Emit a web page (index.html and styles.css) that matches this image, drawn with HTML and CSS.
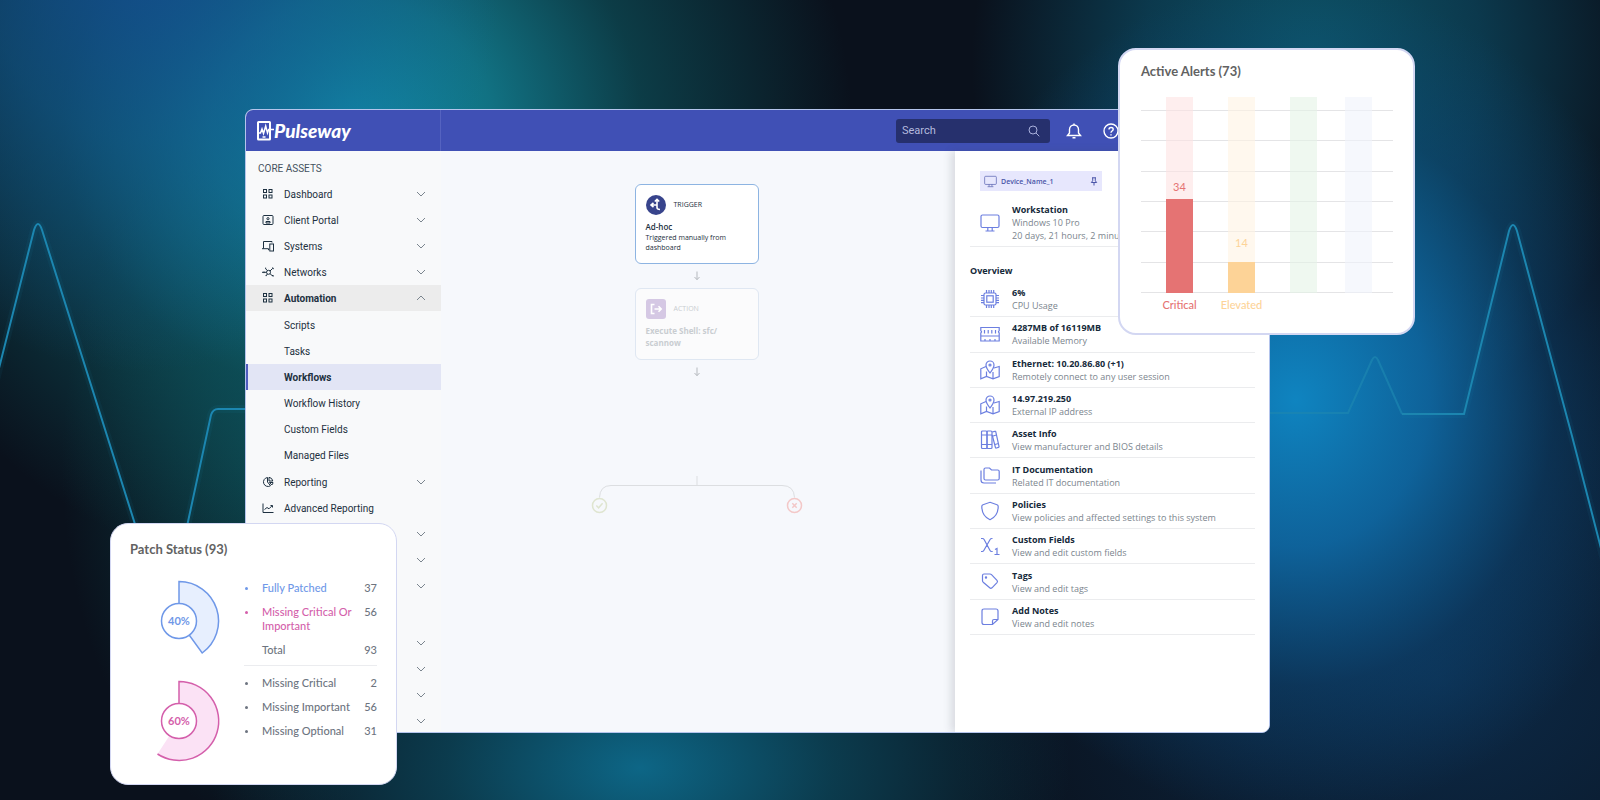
FILE: index.html
```html
<!DOCTYPE html>
<html lang="en">
<head>
    <meta charset="UTF-8">
    <meta name="viewport" content="width=device-width, initial-scale=1.0">
    <title>Pulseway</title>
    <link rel="stylesheet" href="styles.css">
</head>
<body>
    <!-- Shared icons -->
    <svg class="sprite" aria-hidden="true">
        <symbol id="chevron" viewBox="0 0 10 10"><path d="M1 3l4 4 4-4"/></symbol>
        <symbol id="grid" viewBox="0 0 12 12"><rect x="1.5" y="1.5" width="3" height="3"/><rect x="7" y="1.5" width="3" height="3"/><rect x="1.5" y="7" width="3" height="3"/><rect x="7" y="7" width="3" height="3"/></symbol>
        <symbol id="monitor" viewBox="0 0 20 20"><rect x="1" y="2" width="18" height="12.5" rx="1.5"/><path d="M7.8 14.5v3M12.2 14.5v3M5.5 18h9"/></symbol>
        <symbol id="map" viewBox="0 0 20 20"><path d="M6 6.500L.8 8.800v10l5.700-2.300 6.500 2.300 6.200-2.300v-10L14 8M6.500 11.500v5M13 12v6.800"/><path d="M10 13C7.800 10.200 6 7.800 6 5a4 4 0 0 1 8 0c0 2.800-1.800 5.200-4 8z"/><circle cx="10" cy="5" r="1"/></symbol>
        <symbol id="arrow" viewBox="0 0 8 10"><path d="M4 0.500v8M1.500 6L4 8.700 6.500 6"/></symbol>
    </svg>

    <div class="hero">
        <svg class="pulse" viewBox="0 0 1600 800" preserveAspectRatio="xMidYMid slice" aria-hidden="true">
            <path class="pulse-glow" d="M-4 380L34 230Q38 218 42 230L140 540L164 640L186 531L211 415Q213 409 218 409H260"/>
            <path d="M-4 380L34 230Q38 218 42 230L140 540L164 640L186 531L211 415Q213 409 218 409H260"/>
            <path class="pulse-glow" d="M1402 414H1464L1509 231Q1513 219 1517 231L1572 436L1604 560"/>
            <path class="pulse-dim" d="M1260 413H1348L1372 360Q1375 354 1378 360L1402 414"/>
            <path d="M1402 414H1464L1509 231Q1513 219 1517 231L1572 436L1604 560"/>
        </svg>

        <div class="stage">
            <div class="window">
                <header class="topbar">
                    <a class="logo" href="#">
                        <svg viewBox="0 0 17 20" aria-hidden="true"><rect x="1" y="1" width="12" height="17.500" rx="0.500"/><path class="logo-line" d="M2 12h1.500L5 8l1.500 4.500L8.700 5l1.800 7 1.200-3.500H17M5.500 16h3"/></svg>
                        <span>Pulseway</span>
                    </a>
                    <div class="topbar-tools">
                        <label class="search">
                            <input type="search" placeholder="Search" aria-label="Search">
                            <svg viewBox="0 0 12 12" aria-hidden="true"><circle cx="5" cy="5" r="4"/><path d="M8 8l3.300 3.300"/></svg>
                        </label>
                        <button class="tool" type="button" aria-label="Notifications">
                            <svg viewBox="0 0 16 16"><path d="M1.500 12.500h13L12.500 10V6.500C12.500 4 10.500 2 8 2S3.500 4 3.500 6.500V10z"/><path d="M8 .5V2M6.500 14.800h3"/></svg>
                        </button>
                        <button class="tool" type="button" aria-label="Help">
                            <svg viewBox="0 0 16 16"><circle cx="8" cy="8" r="7"/><path d="M6 6.500c0-2.700 4.200-2.700 4.200-.2C10.200 8 8 8 8 9.700M8 11.200v1.200"/></svg>
                        </button>
                    </div>
                </header>

                <div class="workspace">
                    <nav class="sidebar">
                        <h2>CORE ASSETS</h2>
                        <a class="nav-item" href="#"><svg class="nav-icon"><use href="#grid"/></svg>Dashboard<svg class="chevron"><use href="#chevron"/></svg></a>
                        <a class="nav-item" href="#"><svg class="nav-icon" viewBox="0 0 12 12"><rect x="1" y="1.500" width="10" height="9" rx="1"/><circle cx="6" cy="4.700" r="1.100"/><path d="M4 9V7.500h4V9z"/></svg>Client Portal<svg class="chevron"><use href="#chevron"/></svg></a>
                        <a class="nav-item" href="#"><svg class="nav-icon" viewBox="0 0 12 12"><path d="M10 2.500V1.500H1.500v7M0 8.700h6.500v1.500"/><rect x="7.800" y="4" width="3.700" height="7"/></svg>Systems<svg class="chevron"><use href="#chevron"/></svg></a>
                        <a class="nav-item" href="#"><svg class="nav-icon" viewBox="0 0 12 12"><circle cx="6.500" cy="6.300" r="2"/><path d="M0 6.300h4.500M5.300 4.600L3.500 2.500M8 5l2.500-2.500M8 7.700l2.500 2.200M5.300 8l-1 1.500"/><path d="M2 5.500v1.600M3 2.200h1.200M10 2h1.200v1.200M10 9.500h1.300v1M3.600 9.600h1.200"/></svg>Networks<svg class="chevron"><use href="#chevron"/></svg></a>
                        <a class="nav-item open" href="#"><svg class="nav-icon"><use href="#grid"/></svg>Automation<svg class="chevron"><use href="#chevron"/></svg></a>
                        <div class="submenu">
                            <a class="nav-item" href="#">Scripts</a>
                            <a class="nav-item" href="#">Tasks</a>
                            <a class="nav-item active" href="#">Workflows</a>
                            <a class="nav-item" href="#">Workflow History</a>
                            <a class="nav-item" href="#">Custom Fields</a>
                            <a class="nav-item" href="#">Managed Files</a>
                        </div>
                        <a class="nav-item" href="#"><svg class="nav-icon" viewBox="0 0 12 12"><path d="M5.500 1.500a4.500 4.500 0 1 0 3 8.200L5.500 6z"/><path d="M7 1.300A4.500 4.500 0 0 1 10.800 5H7zM7.500 6.500H11A4 4 0 0 1 9.800 9z"/></svg>Reporting<svg class="chevron"><use href="#chevron"/></svg></a>
                        <a class="nav-item" href="#"><svg class="nav-icon" viewBox="0 0 12 12"><path d="M1 1.500v9h10.500M2.500 7.500l2.500-2 2 1.300 3-3M8.500 3.500h2V5.500"/></svg>Advanced Reporting</a>
                        <button class="nav-item" type="button" aria-label="Expand"><svg class="chevron"><use href="#chevron"/></svg></button>
                        <button class="nav-item" type="button" aria-label="Expand"><svg class="chevron"><use href="#chevron"/></svg></button>
                        <button class="nav-item" type="button" aria-label="Expand"><svg class="chevron"><use href="#chevron"/></svg></button>
                        <div class="nav-group">
                            <button class="nav-item" type="button" aria-label="Expand"><svg class="chevron"><use href="#chevron"/></svg></button>
                            <button class="nav-item" type="button" aria-label="Expand"><svg class="chevron"><use href="#chevron"/></svg></button>
                            <button class="nav-item" type="button" aria-label="Expand"><svg class="chevron"><use href="#chevron"/></svg></button>
                            <button class="nav-item" type="button" aria-label="Expand"><svg class="chevron"><use href="#chevron"/></svg></button>
                        </div>
                    </nav>

                    <main class="canvas">
                        <section class="step">
                            <div class="step-head">
                                <span class="step-icon trigger"><svg viewBox="0 0 20 20"><path d="M5.500 10h5.500M7.500 7.800L5 10l2.500 2.200M11 4.500v8q0 2 3 2M8.800 6.500L11 4.300l2.200 2.200"/></svg></span>
                                <span>TRIGGER</span>
                            </div>
                            <h3>Ad-hoc</h3>
                            <p>Triggered manually from dashboard</p>
                        </section>
                        <svg class="flow-arrow"><use href="#arrow"/></svg>
                        <section class="step faded">
                            <div class="step-head">
                                <span class="step-icon action"><svg viewBox="0 0 20 20"><path d="M8.500 5.500H5.500v9h3M8.500 10h6.500M12.500 7.300L15.200 10l-2.700 2.700"/></svg></span>
                                <span>ACTION</span>
                            </div>
                            <h3>Execute Shell: sfc/ scannow</h3>
                        </section>
                        <svg class="flow-arrow"><use href="#arrow"/></svg>
                        <svg class="branch" viewBox="0 0 212 40" aria-hidden="true">
                            <path class="branch-line" d="M106 1v9.500M8.500 22.500Q9 10.500 20 10.500H191Q203 10.500 203.500 22.500"/>
                            <circle class="yes" cx="8.500" cy="30.500" r="7"/>
                            <path class="yes" d="M5.300 30.500l2.300 2.300 4-4.500"/>
                            <circle class="no" cx="203.500" cy="30.500" r="7"/>
                            <path class="no" d="M201.300 28.300l4.400 4.400M205.700 28.300l-4.400 4.400"/>
                        </svg>
                    </main>

                    <aside class="details">
                        <div class="device-chip">
                            <svg class="chip-monitor"><use href="#monitor"/></svg>
                            <span>Device_Name_1</span>
                            <svg class="chip-pin" viewBox="0 0 8 9"><path d="M2 .8h4M2.700.8v3L1.300 5.500h5.400L5.300 3.800v-3M4 5.500v3"/></svg>
                        </div>
                        <div class="info-row machine">
                            <svg class="info-icon"><use href="#monitor"/></svg>
                            <div>
                                <h3>Workstation</h3>
                                <p>Windows 10 Pro</p>
                                <p>20 days, 21 hours, 2 minu</p>
                            </div>
                        </div>
                        <h2>Overview</h2>
                        <div class="info-list">
                            <div class="info-row">
                                <svg class="info-icon" viewBox="0 0 20 20"><rect x="4" y="4" width="12" height="12" rx="1.500"/><rect x="6.800" y="6.800" width="6.400" height="6.400"/><path d="M6.500 1v3M9 1v3M11.300 1v3M13.700 1v3M6.500 16v3M9 16v3M11.300 16v3M13.700 16v3M1 6.500h3M1 9h3M1 11.300h3M1 13.700h3M16 6.500h3M16 9h3M16 11.300h3M16 13.700h3"/></svg>
                                <div><h3>6%</h3><p>CPU Usage</p></div>
                            </div>
                            <div class="info-row">
                                <svg class="info-icon" viewBox="0 0 20 20"><path d="M.8 3.500h18.400v3.200q-1.500 1 0 2.300v3H.8v-3q1.500-1.300 0-2.300zM.8 12v5h18.400v-5M4.500 6v3.500M8.200 6v3.500M11.800 6v3.500M15.500 6v3.500M5 17v-2M10 17v-2M15 17v-2"/></svg>
                                <div><h3>4287MB of 16119MB</h3><p>Available Memory</p></div>
                            </div>
                            <div class="info-row">
                                <svg class="info-icon"><use href="#map"/></svg>
                                <div><h3>Ethernet: 10.20.86.80 (+1)</h3><p>Remotely connect to any user session</p></div>
                            </div>
                            <div class="info-row">
                                <svg class="info-icon"><use href="#map"/></svg>
                                <div><h3>14.97.219.250</h3><p>External IP address</p></div>
                            </div>
                            <div class="info-row">
                                <svg class="info-icon" viewBox="0 0 20 20"><rect x="1.500" y="1" width="5.500" height="17.500" rx="1"/><rect x="7" y="1" width="5" height="17.500" rx="1"/><path d="M1.500 5H12M1.500 14.500H12M12.200 2l2.600-.7q.8-.2 1 .6l3.200 14.500q.2.800-.6 1l-2 .6q-.8.200-1-.6L12.200 5M13 6l3.500-1M15 14.500l3.500-1"/></svg>
                                <div><h3>Asset Info</h3><p>View manufacturer and BIOS details</p></div>
                            </div>
                            <div class="info-row">
                                <svg class="info-icon" viewBox="0 0 20 20"><path d="M5.500 2h4l2 2h6.200q1.500 0 1.500 1.500v7q0 1.500-1.500 1.500H5.500Q4 14 4 12.500v-9Q4 2 5.500 2zM1 4.500v9.500q0 3 3 3h12"/></svg>
                                <div><h3>IT Documentation</h3><p>Related IT documentation</p></div>
                            </div>
                            <div class="info-row">
                                <svg class="info-icon" viewBox="0 0 20 20"><path d="M10 1.300l7 2.400q1.200.4 1.200 1.700C18.200 11.500 15 16.500 10 18.700 5 16.500 1.800 11.500 1.800 5.400q0-1.300 1.200-1.700z"/></svg>
                                <div><h3>Policies</h3><p>View policies and affected settings to this system</p></div>
                            </div>
                            <div class="info-row">
                                <svg class="info-icon" viewBox="0 0 20 20"><path d="M1 2.500h1.500q1 0 1.600 1l5.800 10.800q.6 1.200 1.800 1.200h1M12.500 2.500h-.8q-1 0-1.600 1L3.800 14.500q-.6 1-1.600 1H1M15 13.500l2-1v6M14.500 18.500h5"/></svg>
                                <div><h3>Custom Fields</h3><p>View and edit custom fields</p></div>
                            </div>
                            <div class="info-row">
                                <svg class="info-icon" viewBox="0 0 20 20"><path d="M2.500 3.500q0-1.500 1.500-1.500h6q.8 0 1.500.7l5.500 5.600q1 1.200 0 2.300l-5 5.200q-1.200 1-2.300 0L3.200 10.200q-.7-.7-.7-1.500z"/><circle cx="6" cy="5.500" r=".6"/></svg>
                                <div><h3>Tags</h3><p>View and edit tags</p></div>
                            </div>
                            <div class="info-row">
                                <svg class="info-icon" viewBox="0 0 20 20"><path d="M4 2h12q2 0 2 2v8.500L12.500 17.500H4q-2 0-2-2V4q0-2 2-2zM18 12.500h-4q-1.500 0-1.500 1.500v3.500"/></svg>
                                <div><h3>Add Notes</h3><p>View and edit notes</p></div>
                            </div>
                        </div>
                    </aside>
                </div>
            </div>

            <section class="card alerts">
                <h2>Active Alerts (73)</h2>
                <div class="chart">
                    <div class="gridlines"><i></i><i></i><i></i><i></i><i></i><i></i><i></i></div>
                    <div class="bar critical"><span>34</span><div class="fill" style="height: 48%"></div><b>Critical</b></div>
                    <div class="bar elevated"><span>14</span><div class="fill" style="height: 16%"></div><b>Elevated</b></div>
                    <div class="bar normal"></div>
                    <div class="bar low"></div>
                </div>
            </section>

            <section class="card patches">
                <h2>Patch Status (93)</h2>
                <div class="patch-body">
                    <div class="donuts">
                        <svg class="donut patched" viewBox="0 0 84 84" role="img">
                            <path class="wedge edge" d="M42 42V2.500A39.500 39.500 0 0 1 65.200 74z"/>
                            <circle cx="42" cy="42" r="17.500"/>
                            <text x="42" y="46">40%</text>
                        </svg>
                        <svg class="donut missing" viewBox="0 0 84 84" role="img">
                            <path class="wedge" d="M42 42V2.500A39.500 39.500 0 1 1 20.500 75z"/>
                            <path class="edge" d="M42 42V2.500A39.500 39.500 0 1 1 20.500 75"/>
                            <circle cx="42" cy="42" r="17.500"/>
                            <text x="42" y="46">60%</text>
                        </svg>
                    </div>
                    <div class="patch-lists">
                        <ul>
                            <li class="patched"><span>Fully Patched</span><b>37</b></li>
                            <li class="missing"><span>Missing Critical Or Important</span><b>56</b></li>
                            <li class="total"><span>Total</span><b>93</b></li>
                        </ul>
                        <ul>
                            <li><span>Missing Critical</span><b>2</b></li>
                            <li><span>Missing Important</span><b>56</b></li>
                            <li><span>Missing Optional</span><b>31</b></li>
                        </ul>
                    </div>
                </div>
            </section>
        </div>
    </div>
</body>
</html>
```

FILE: styles.css
```css
* {
    box-sizing: border-box;
}

body {
    margin: 0;
    font-family: "Open Sans", "Noto Sans", sans-serif;
    color: #1d3040;
    background-color: #0a111c;
}

h2, h3, p, ul {
    margin: 0;
    padding: 0;
}

svg {
    fill: none;
    stroke: currentColor;
    flex-shrink: 0;
}

a {
    color: inherit;
    text-decoration: none;
}

button {
    padding: 0;
    border: none;
    background: none;
    color: inherit;
    cursor: pointer;
}

.sprite {
    position: absolute;
    width: 0;
    height: 0;
}

.hero {
    position: relative;
    display: flex;
    min-height: 100vh;
    padding: 109px 330px 67px 245px;
    overflow: hidden;
    background:
        radial-gradient(ellipse 380px 420px at 81% 50%, #0f84c0 0%, rgba(15, 110, 172, 0.85) 35%, rgba(13, 76, 126, 0.45) 68%, rgba(13, 60, 100, 0) 100%),
        radial-gradient(ellipse 340px 380px at 82% 8%, #0d5568 0%, rgba(12, 74, 98, 0.7) 50%, rgba(12, 60, 80, 0) 100%),
        radial-gradient(ellipse 360px 420px at 9% -6%, rgba(20, 78, 148, 0.85) 0%, rgba(18, 88, 150, 0.55) 45%, rgba(18, 90, 145, 0) 100%),
        radial-gradient(ellipse 500px 460px at 22% 16%, #1290a8 0%, rgba(18, 124, 142, 0.9) 28%, rgba(14, 96, 106, 0.55) 58%, rgba(12, 70, 76, 0) 100%),
        radial-gradient(ellipse 430px 260px at 40% 96%, #0d6686 0%, rgba(12, 82, 104, 0.65) 45%, rgba(12, 70, 90, 0) 100%),
        radial-gradient(ellipse 210px 360px at 17% 58%, rgba(13, 82, 88, 0.7) 0%, rgba(13, 70, 80, 0) 100%),
        radial-gradient(ellipse 500px 400px at 90% 85%, #0c2a48 0%, rgba(12, 36, 62, 0) 100%),
        #0a111c;
}

.pulse {
    position: absolute;
    inset: 0;
    width: 100%;
    height: 100%;
    color: #1c86b0;
    stroke-width: 2;
}

.pulse-glow {
    stroke-width: 8;
    opacity: 0.08;
}

.pulse-dim {
    opacity: 0.7;
}

.stage {
    position: relative;
    display: flex;
    flex: 1;
}

.window {
    display: flex;
    flex: 1;
    flex-direction: column;
    overflow: hidden;
    border: 1px solid #b4c4ec;
    border-radius: 8px;
    background-color: #f6f8fc;
}

/* Top bar */
.topbar {
    display: flex;
    height: 41px;
    color: #fff;
    background-color: #4050b5;
}

.logo {
    display: flex;
    align-items: center;
    width: 195px;
    padding-left: 11px;
    border-right: 1px solid #5563c0;
    font-family: Lato, sans-serif;
    font-size: 19px;
    font-weight: 900;
    font-style: italic;
}

.logo svg {
    width: 17px;
    height: 20px;
    stroke-width: 2;
}

.logo-line {
    stroke-width: 1.5;
}

.topbar-tools {
    display: flex;
    flex: 1;
    align-items: center;
    justify-content: flex-end;
    gap: 16px;
    padding-right: 145px;
}

.search {
    display: flex;
    align-items: center;
    width: 154px;
    height: 24px;
    padding: 0 10px 0 6px;
    border-radius: 3px;
    color: #a9b0dc;
    background-color: #26306d;
}

.search input {
    flex: 1;
    min-width: 0;
    padding: 0;
    border: none;
    outline: none;
    font-family: Roboto, sans-serif;
    font-size: 11px;
    color: #fff;
    background: none;
}

.search input::placeholder {
    color: #b4badd;
}

.search svg {
    width: 12px;
    height: 12px;
}

.tool {
    display: flex;
    width: 16px;
    height: 16px;
    margin-right: 5px;
}

.tool svg {
    width: 16px;
    height: 16px;
    stroke-width: 1.4;
}

.workspace {
    display: flex;
    flex: 1;
}

/* Sidebar */
.sidebar {
    width: 195px;
    padding-top: 6px;
    font-family: Roboto, sans-serif;
    background-color: #f8f9fa;
}

.sidebar h2 {
    padding-left: 12px;
    font-size: 10px;
    font-weight: 400;
    line-height: 24px;
    color: #44525e;
}

.nav-item {
    display: flex;
    align-items: center;
    width: 100%;
    height: 26px;
    padding: 0 15px 0 16px;
    font-size: 10px;
}

.nav-icon {
    width: 12px;
    height: 12px;
    margin-right: 10px;
}

.chevron {
    width: 10px;
    height: 10px;
    margin-left: auto;
    color: #7b858e;
}

.nav-item.open {
    font-weight: 700;
    background-color: #ececec;
}

.nav-item.open .chevron {
    transform: rotate(180deg);
}

.submenu {
    padding: 1px 0;
}

.submenu .nav-item {
    padding-left: 38px;
}

.submenu .active {
    padding-left: 36px;
    border-left: 2px solid #4f5bbd;
    font-weight: 700;
    background-color: #e2e5f5;
}

/* The last row is cut by the window edge */
.nav-group {
    margin-bottom: -4px;
    padding-top: 31px;
}

/* Workflow canvas */
.canvas {
    display: flex;
    flex: 1;
    flex-direction: column;
    align-items: center;
    padding: 33px 3px 0 0;
}

.step {
    width: 124px;
    padding: 10px;
    border: 1px solid #8db4e2;
    border-radius: 6px;
    background-color: #fff;
}

.step-head {
    display: flex;
    align-items: center;
    gap: 8px;
    margin-bottom: 6px;
    font-size: 7px;
    line-height: 10px;
}

.step-icon {
    display: flex;
    width: 20px;
    height: 20px;
    color: #fff;
}

.step-icon svg {
    width: 20px;
    height: 20px;
    stroke-width: 1.6;
}

.trigger {
    border-radius: 50%;
    background-color: #38448c;
}

.action {
    border-radius: 3px;
    background-color: #d5c8e4;
}

.step h3 {
    font-size: 8px;
    font-weight: 600;
    line-height: 12px;
}

.step p {
    font-size: 7px;
    line-height: 10px;
}

.step.faded {
    border-color: #dfe7f2;
    color: #c9cdd1;
    background-color: #fbfbfc;
}

.step.faded h3 {
    font-weight: 700;
}

.flow-arrow {
    width: 8px;
    height: 10px;
    margin: 7px 0;
    color: #b5b9be;
}

.branch {
    width: 212px;
    height: 40px;
    margin-top: 91px;
}

.branch-line {
    stroke: #dcdee1;
}

.yes {
    stroke: #dfe5d0;
    stroke-width: 1.5;
}

.no {
    stroke: #f3c8c8;
    stroke-width: 1.5;
}

/* Device details */
.details {
    display: flex;
    flex-direction: column;
    width: 314px;
    padding: 20px 14px 97px 15px;
    background-color: #fff;
    box-shadow: -4px 0 8px rgba(60, 70, 80, 0.16);
}

.device-chip {
    display: flex;
    align-items: center;
    gap: 4px;
    width: 122px;
    height: 20px;
    margin-left: 10px;
    padding: 0 4px;
    font-size: 7px;
    font-weight: 600;
    color: #4a55a8;
    background-color: #e7e7fd;
}

.chip-monitor {
    width: 13px;
    height: 13px;
}

.chip-pin {
    width: 8px;
    height: 9px;
    margin-left: auto;
}

.info-row {
    display: flex;
    align-items: center;
    gap: 12px;
    padding-left: 10px;
    border-bottom: 1px solid #ebecee;
}

.info-row h3 {
    font-size: 9px;
    font-weight: 700;
    line-height: 13px;
    color: #15293a;
}

.info-row p {
    font-size: 9px;
    line-height: 13px;
    color: #7b858e;
}

.info-icon {
    width: 20px;
    height: 20px;
    color: #6c7fe0;
    stroke-width: 1.2;
}

.info-row.machine {
    padding-top: 12px;
    padding-bottom: 4px;
}

.details h2 {
    margin-top: 16px;
    font-size: 9px;
    font-weight: 700;
    line-height: 15px;
    color: #15293a;
}

.info-list {
    display: flex;
    flex: 1;
    flex-direction: column;
    padding-top: 4px;
}

.info-list .info-row {
    flex: 1;
}

/* Floating cards */
.card {
    position: absolute;
    border: 2px solid #d3d7f2;
    border-radius: 18px;
    font-family: Lato, sans-serif;
    background-color: #fff;
}

.card h2 {
    font-size: 13px;
    font-weight: 700;
    line-height: 16px;
    color: #626262;
}

.alerts {
    top: -61px;
    right: -145px;
    width: 297px;
    padding: 13px 20px 40px 21px;
}

.chart {
    position: relative;
    display: flex;
    gap: 35px;
    height: 196px;
    margin-top: 18px;
    padding-left: 25px;
}

.gridlines {
    position: absolute;
    inset: 13px 0 0;
    display: flex;
    flex-direction: column;
    justify-content: space-between;
}

.gridlines i {
    height: 1px;
    background-color: #e4e4e6;
}

.bar {
    position: relative;
    display: flex;
    flex-direction: column;
    align-items: center;
    justify-content: flex-end;
    width: 27px;
    height: 196px;
    font-size: 11px;
    line-height: 14px;
}

.bar span {
    margin-bottom: 5px;
}

.bar b {
    position: absolute;
    top: 100%;
    margin-top: 5px;
    font-weight: 500;
}

.fill {
    width: 100%;
    background-color: currentColor;
}

.critical {
    color: #e57373;
    background-color: rgba(253, 226, 226, 0.6);
}

.elevated {
    color: #fdd397;
    background-color: rgba(255, 244, 226, 0.6);
}

.elevated span {
    margin-bottom: 12px;
}

.normal {
    background-color: rgba(228, 243, 230, 0.6);
}

.low {
    margin-left: -7px;
    background-color: rgba(240, 243, 251, 0.6);
}

.patches {
    bottom: -52px;
    left: -135px;
    width: 287px;
    padding: 17px 19px 21px;
    border-width: 1px;
}

.patch-body {
    display: flex;
    justify-content: space-between;
    margin-top: 22px;
}

.donuts {
    display: flex;
    flex-direction: column;
    gap: 16px;
    padding-left: 7px;
}

.donut {
    width: 84px;
    height: 84px;
    stroke: none;
}

.donut circle {
    fill: #fff;
    stroke: currentColor;
    stroke-width: 1.5;
}

.donut text {
    fill: currentColor;
    font-size: 11px;
    font-weight: 700;
    text-anchor: middle;
}

.edge {
    stroke: currentColor;
    stroke-width: 1.5;
}

.patched {
    color: #6f98e8;
}

.missing {
    color: #d45fab;
}

.patched .wedge {
    fill: #e7effe;
}

.missing .wedge {
    fill: #fbe2f5;
}

.patch-lists {
    width: 133px;
    padding-top: 2px;
    font-size: 11px;
    font-weight: 500;
    line-height: 14px;
    color: #6d7480;
}

.patch-lists ul {
    display: flex;
    flex-direction: column;
    gap: 10px;
    list-style: none;
}

.patch-lists ul + ul {
    margin-top: 8px;
    padding-top: 10px;
    border-top: 1px solid #ebecef;
}

.patch-lists li {
    display: flex;
    justify-content: space-between;
}

.patch-lists li::before {
    content: "";
    width: 3px;
    height: 3px;
    margin: 6px 14px 0 1px;
    border-radius: 50%;
    background-color: currentColor;
}

.patch-lists .total::before {
    background: none;
}

.patch-lists span {
    flex: 1;
}

.patch-lists b {
    font-weight: 500;
    color: #6d7480;
}
```
